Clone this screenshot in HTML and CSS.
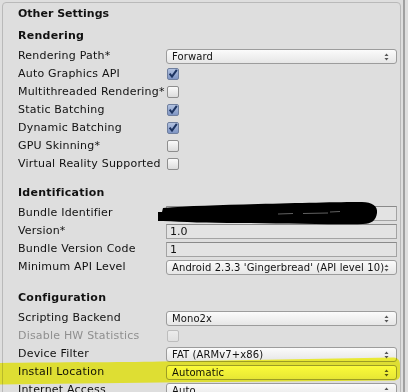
FILE: index.html
```html
<!DOCTYPE html>
<html>
<head>
<meta charset="utf-8">
<link rel="stylesheet" href="styles.css">
</head>
<body>
<div class="page">
  <div class="panel">
    <div class="title">Other Settings</div>

    <section class="section first">
      <div class="heading">Rendering</div>
      <div class="row"><span class="label">Rendering Path*</span><div class="dropdown"><span class="dd-text">Forward</span><svg class="arrows" width="5" height="8" viewBox="0 0 5 8"><path d="M0.5 3 L2.5 0.5 L4.5 3 Z M0.5 5 L2.5 7.5 L4.5 5 Z"/></svg></div></div>
      <div class="row"><span class="label">Auto Graphics API</span><span class="check on"><svg width="12" height="12" viewBox="0 0 12 12"><path d="M2.6 5.6 L5 8.6 L9.8 1.8"/></svg></span></div>
      <div class="row"><span class="label">Multithreaded Rendering*</span><span class="check"></span></div>
      <div class="row"><span class="label">Static Batching</span><span class="check on"><svg width="12" height="12" viewBox="0 0 12 12"><path d="M2.6 5.6 L5 8.6 L9.8 1.8"/></svg></span></div>
      <div class="row"><span class="label">Dynamic Batching</span><span class="check on"><svg width="12" height="12" viewBox="0 0 12 12"><path d="M2.6 5.6 L5 8.6 L9.8 1.8"/></svg></span></div>
      <div class="row"><span class="label">GPU Skinning*</span><span class="check"></span></div>
      <div class="row"><span class="label">Virtual Reality Supported</span><span class="check"></span></div>
    </section>

    <section class="section second">
      <div class="heading">Identification</div>
      <div class="row"><span class="label">Bundle Identifier</span><div class="field">com.example.app</div></div>
      <div class="row"><span class="label">Version*</span><div class="field">1.0</div></div>
      <div class="row"><span class="label">Bundle Version Code</span><div class="field">1</div></div>
      <div class="row"><span class="label">Minimum API Level</span><div class="dropdown"><span class="dd-text">Android 2.3.3 'Gingerbread' (API level 10)</span><svg class="arrows" width="5" height="8" viewBox="0 0 5 8"><path d="M0.5 3 L2.5 0.5 L4.5 3 Z M0.5 5 L2.5 7.5 L4.5 5 Z"/></svg></div></div>
    </section>

    <section class="section third">
      <div class="heading">Configuration</div>
      <div class="row"><span class="label">Scripting Backend</span><div class="dropdown"><span class="dd-text">Mono2x</span><svg class="arrows" width="5" height="8" viewBox="0 0 5 8"><path d="M0.5 3 L2.5 0.5 L4.5 3 Z M0.5 5 L2.5 7.5 L4.5 5 Z"/></svg></div></div>
      <div class="row"><span class="label disabled">Disable HW Statistics</span><span class="check dis"></span></div>
      <div class="row"><span class="label">Device Filter</span><div class="dropdown"><span class="dd-text">FAT (ARMv7+x86)</span><svg class="arrows" width="5" height="8" viewBox="0 0 5 8"><path d="M0.5 3 L2.5 0.5 L4.5 3 Z M0.5 5 L2.5 7.5 L4.5 5 Z"/></svg></div></div>
      <div class="row"><span class="label">Install Location</span><div class="dropdown"><span class="dd-text">Automatic</span><svg class="arrows" width="5" height="8" viewBox="0 0 5 8"><path d="M0.5 3 L2.5 0.5 L4.5 3 Z M0.5 5 L2.5 7.5 L4.5 5 Z"/></svg></div></div>
      <div class="row"><span class="label">Internet Access</span><div class="dropdown"><span class="dd-text">Auto</span><svg class="arrows" width="5" height="8" viewBox="0 0 5 8"><path d="M0.5 3 L2.5 0.5 L4.5 3 Z M0.5 5 L2.5 7.5 L4.5 5 Z"/></svg></div></div>
    </section>
  </div>
  <div class="edge"></div>

  <svg class="redact" width="230" height="26" viewBox="0 0 230 26">
    <path d="M0 11 L4 11 L5 7 C30 5 60 4 100 3 C140 2 180 1 204 1 C214 1 220 5 219 12 C218 19 214 23 205 23 C170 24 120 22 80 22 C50 22 25 21 5 20 L0 20 Z"/>
    <path class="scratch" d="M120 13 L135 12.5 M145 12.5 L170 12 M172 11 L182 10.5"/>
  </svg>

  <svg class="highlight" width="408" height="30" viewBox="0 0 408 30">
    <path d="M0 7 C60 6 120 6.5 160 5.5 C240 4 320 3 392 1.5 C397 1.5 400 3 400 9 L400 19 C400 23 397 24.5 393 24.5 C320 25 240 26 160 26.5 C110 27 50 28 0 28.5 Z"/>
  </svg>
</div>
</body>
</html>
```

FILE: styles.css
```css
html, body {
  margin: 0;
  padding: 0;
}

body {
  background: #dedede;
  font-family: "DejaVu Sans", Verdana, sans-serif;
  font-size: 11px;
  color: #111;
  overflow: hidden;
}

.page {
  position: relative;
  width: 408px;
  height: 392px;
  display: flex;
  align-items: flex-start;
}

.panel {
  margin: 2px 0 0 2px;
  width: 399px;
  box-sizing: border-box;
  height: 420px;
  border: 1px solid #b9b9b9;
  border-radius: 4px 4px 0 0;
  background: #dedede;
  padding: 2px 3px 0 15px;
}

.edge {
  margin-left: 2px;
  width: 2px;
  height: 392px;
  background: #a0a0a0;
}

.title {
  font-weight: bold;
  line-height: 18px;
  height: 18px;
}

.heading {
  font-weight: bold;
  line-height: 18px;
  height: 18px;
  margin-bottom: 2px;
  letter-spacing: 0.25px;
}

.section.first { margin-top: 4px; }
.section.second { margin-top: 11px; }
.section.third { margin-top: 13px; }

.row {
  display: grid;
  grid-template-columns: 148px 1fr;
  height: 18px;
  line-height: 18px;
  align-items: start;
}

.label {
  white-space: nowrap;
  letter-spacing: 0.2px;
}

.label.disabled {
  color: #8f8f8f;
}

.dropdown {
  margin-top: 2px;
  height: 15px;
  box-sizing: border-box;
  border: 1px solid #9c9c9c;
  border-radius: 3px;
  background: linear-gradient(#fbfbfb, #e6e6e6);
  display: flex;
  align-items: center;
  justify-content: space-between;
  padding: 0 7px 0 5px;
  line-height: 13px;
  font-size: 10px;
}

.dd-text {
  white-space: nowrap;
  letter-spacing: 0.1px;
}

.arrows {
  flex: none;
  fill: #555;
}

.field {
  margin-top: 2px;
  height: 15px;
  box-sizing: border-box;
  border: 1px solid #a3a3a3;
  border-top-color: #8a8a8a;
  background: #e3e3e3;
  padding: 0 3px;
  line-height: 13px;
  white-space: nowrap;
  overflow: hidden;
}

.check {
  margin: 3px 0 0 1px;
  width: 12px;
  height: 12px;
  box-sizing: border-box;
  border: 1px solid #8e8e8e;
  border-radius: 2px;
  background: linear-gradient(#fafafa, #dcdcdc);
  position: relative;
}

.check.on {
  background: linear-gradient(#b2c2e0, #7f95c4);
  border-color: #6f7f9f;
}

.check svg {
  position: absolute;
  left: -1px;
  top: -1px;
  fill: none;
  stroke: #1d3461;
  stroke-width: 2;
}

.check.dis {
  border-color: #bdbdbd;
  background: linear-gradient(#ececec, #e0e0e0);
}

.redact {
  position: absolute;
  left: 158px;
  top: 201px;
  fill: #000;
}

.redact .scratch {
  fill: none;
  stroke: #8a8a8a;
  stroke-width: 0.7;
}

.highlight {
  position: absolute;
  left: 0;
  top: 356px;
  fill: #ffff3a;
  mix-blend-mode: multiply;
}
```
